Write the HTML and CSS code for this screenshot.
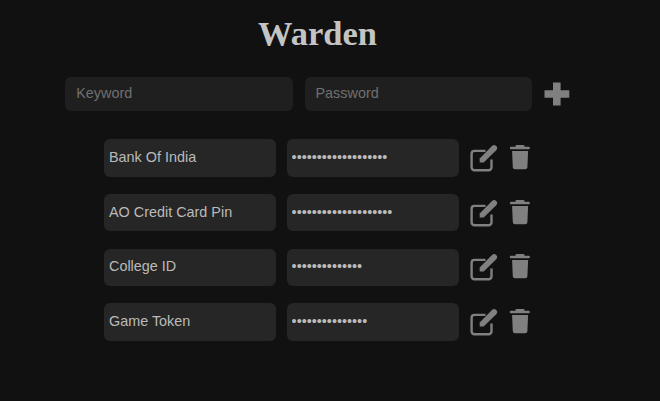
FILE: index.html
```html
<!DOCTYPE html>
<html lang="en">
<head>
    <meta charset="UTF-8">
    <meta name="viewport" content="width=device-width, initial-scale=1.0">
    <title>Warden</title>
    <link rel="stylesheet" href="styles.css">
</head>
<body>
    <svg class="icon-defs">
        <symbol id="icon-edit" viewBox="0 0 28 30">
            <path class="edit-box" d="M15.500 7.900H4.400a2.800 2.800 0 0 0-2.800 2.800v13.700a2.800 2.800 0 0 0 2.800 2.800h14.300a2.800 2.800 0 0 0 2.800-2.800V16.500"/>
            <path d="M9.700 19.400v-4L22 3a3 3 0 0 1 4.200 0a3 3 0 0 1 0 4.200L13.700 19.400z"/>
        </symbol>
        <symbol id="icon-trash" viewBox="-1 0 22 28">
            <path d="M5.500 2.800V2.300a1.300 1.300 0 0 1 1.300-1.300h6.400a1.300 1.300 0 0 1 1.300 1.300v0.500h4.200a0.900 0.900 0 0 1 0 2.400H1a0.900 0.900 0 0 1 0-2.400zM2.100 7h16l-0.700 16.300a2.200 2.200 0 0 1-2.200 2H5a2.200 2.200 0 0 1-2.200-2z"/>
        </symbol>
    </svg>

    <main class="app">
        <h1 class="title">Warden</h1>

        <form class="add-form">
            <input class="add-input" type="text" placeholder="Keyword">
            <input class="add-input" type="password" placeholder="Password">
            <button class="icon-button" type="button" aria-label="Add">
                <svg width="26" height="24" viewBox="0 0 26 24"><path d="M9 0.500h7.600v7.700h8.700v7.600h-8.700v7.700H9v-7.700H0.500V8.200H9z"/></svg>
            </button>
        </form>

        <ul class="entries">
            <li class="entry">
                <input class="entry-input" type="text" value="Bank Of India" readonly>
                <input class="entry-input" type="password" value="1234567890123456789" readonly>
                <button class="icon-button" type="button" aria-label="Edit"><svg width="28" height="30"><use href="#icon-edit"/></svg></button>
                <button class="icon-button" type="button" aria-label="Delete"><svg width="22" height="28"><use href="#icon-trash"/></svg></button>
            </li>
            <li class="entry">
                <input class="entry-input" type="text" value="AO Credit Card Pin" readonly>
                <input class="entry-input" type="password" value="12345678901234567890" readonly>
                <button class="icon-button" type="button" aria-label="Edit"><svg width="28" height="30"><use href="#icon-edit"/></svg></button>
                <button class="icon-button" type="button" aria-label="Delete"><svg width="22" height="28"><use href="#icon-trash"/></svg></button>
            </li>
            <li class="entry">
                <input class="entry-input" type="text" value="College ID" readonly>
                <input class="entry-input" type="password" value="12345678901234" readonly>
                <button class="icon-button" type="button" aria-label="Edit"><svg width="28" height="30"><use href="#icon-edit"/></svg></button>
                <button class="icon-button" type="button" aria-label="Delete"><svg width="22" height="28"><use href="#icon-trash"/></svg></button>
            </li>
            <li class="entry">
                <input class="entry-input" type="text" value="Game Token" readonly>
                <input class="entry-input" type="password" value="123456789012345" readonly>
                <button class="icon-button" type="button" aria-label="Edit"><svg width="28" height="30"><use href="#icon-edit"/></svg></button>
                <button class="icon-button" type="button" aria-label="Delete"><svg width="22" height="28"><use href="#icon-trash"/></svg></button>
            </li>
        </ul>
    </main>
</body>
</html>
```

FILE: styles.css
```css
html, body {
    height: 100%;
    overflow: hidden;
}

body {
    margin: 0;
    background-color: #111111;
    color: #bbbbbb;
    font-family: "Liberation Sans", Arial, sans-serif;
    font-size: 14.4px;
}

.icon-defs {
    display: none;
}

.app {
    width: 635px;
    padding-top: 13px;
}

.title {
    margin: 0 0 23px;
    text-align: center;
    font-family: "Liberation Serif", "Times New Roman", serif;
    font-size: 34.5px;
    font-weight: bold;
    line-height: 41px;
    color: #c4c4c4;
}

.add-form {
    display: flex;
    justify-content: center;
    align-items: center;
    gap: 11.5px;
    margin-bottom: 28.3px;
}

input {
    box-sizing: border-box;
    border: none;
    outline: none;
    border-radius: 6px;
    font-family: inherit;
    font-size: inherit;
    color: #bbbbbb;
}

.add-input {
    width: 227.8px;
    height: 34px;
    padding: 0 11px 2px;
    background-color: #1f1f1f;
}

.add-input::placeholder {
    color: #707070;
}

.icon-button {
    display: flex;
    padding: 0;
    border: none;
    background: none;
    cursor: pointer;
}

.icon-button svg {
    fill: #808080;
}

.entries {
    display: flex;
    flex-direction: column;
    gap: 17.34px;
    margin: 0;
    padding: 0;
    list-style: none;
}

.entry {
    display: flex;
    justify-content: center;
    align-items: center;
    gap: 11px;
    height: 37.33px;
}

.entry-input {
    width: 171.6px;
    height: 37.33px;
    padding: 0 4.6px 2px;
    background-color: #262626;
}

.edit-box {
    fill: none;
    stroke: #808080;
    stroke-width: 2.4;
}
```
